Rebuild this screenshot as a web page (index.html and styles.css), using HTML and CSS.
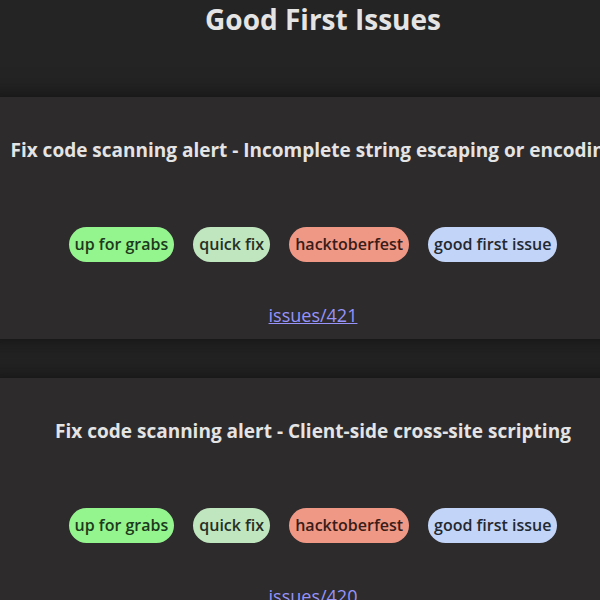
FILE: index.html
```html
<!DOCTYPE html>
<html lang="en">
<head>
<meta charset="utf-8">
<title>Good First Issues</title>
<link rel="stylesheet" href="styles.css">
</head>
<body>
<main class="page">
  <h1 class="page-title">Good First Issues</h1>
  <section class="issues">
    <article class="issue">
      <h2 class="issue-title">Fix code scanning alert - Incomplete string escaping or encoding</h2>
      <ul class="labels">
        <li class="label label-grabs">up for grabs</li>
        <li class="label label-quick">quick fix</li>
        <li class="label label-hack">hacktoberfest</li>
        <li class="label label-first">good first issue</li>
      </ul>
      <a class="issue-link" href="#421">issues/421</a>
    </article>
    <article class="issue">
      <h2 class="issue-title">Fix code scanning alert - Client-side cross-site scripting</h2>
      <ul class="labels">
        <li class="label label-grabs">up for grabs</li>
        <li class="label label-quick">quick fix</li>
        <li class="label label-hack">hacktoberfest</li>
        <li class="label label-first">good first issue</li>
      </ul>
      <a class="issue-link" href="#420">issues/420</a>
    </article>
  </section>
</main>
</body>
</html>
```
FILE: styles.css
```css
* { box-sizing: border-box; }
html { overflow: hidden; }
body {
  margin: 0;
  background: #242424;
  color: #e4e4e4;
  font-family: "Segoe UI", "Open Sans", "Noto Sans", sans-serif;
  font-size: 18px;
  line-height: 24px;
}
.page-title {
  margin: 0;
  padding-left: 46px;
  font-size: 28px;
  line-height: 38px;
  font-weight: 700;
  text-align: center;
}
.issues {
  display: flex;
  flex-direction: column;
  gap: 39px;
  margin: 59px -46px 0 -20px;
}
.issue {
  display: flex;
  flex-direction: column;
  align-items: center;
  padding: 40px 0 12px;
  background: #2d2b2c;
  box-shadow: 0 0 20px #101010;
}
.issue-title {
  margin: 0;
  font-size: 19px;
  line-height: 26px;
  font-weight: 700;
  white-space: nowrap;
}
.labels {
  display: flex;
  gap: 19px;
  margin: 64px 0 41px;
  padding: 0;
  list-style: none;
}
.label {
  padding: 5px 6px;
  border-radius: 18px;
  color: #242424;
  font-size: 16px;
  line-height: 25px;
  font-weight: 600;
  white-space: nowrap;
}
.label-grabs { background: #94f58f; color: #1c3a1c; }
.label-quick { background: #c0e6c0; color: #263026; }
.label-hack { background: #f09886; color: #3a1c18; }
.label-first { background: #c2d4f8; color: #24282f; }
.issue-link { color: #9793fa; }
```
